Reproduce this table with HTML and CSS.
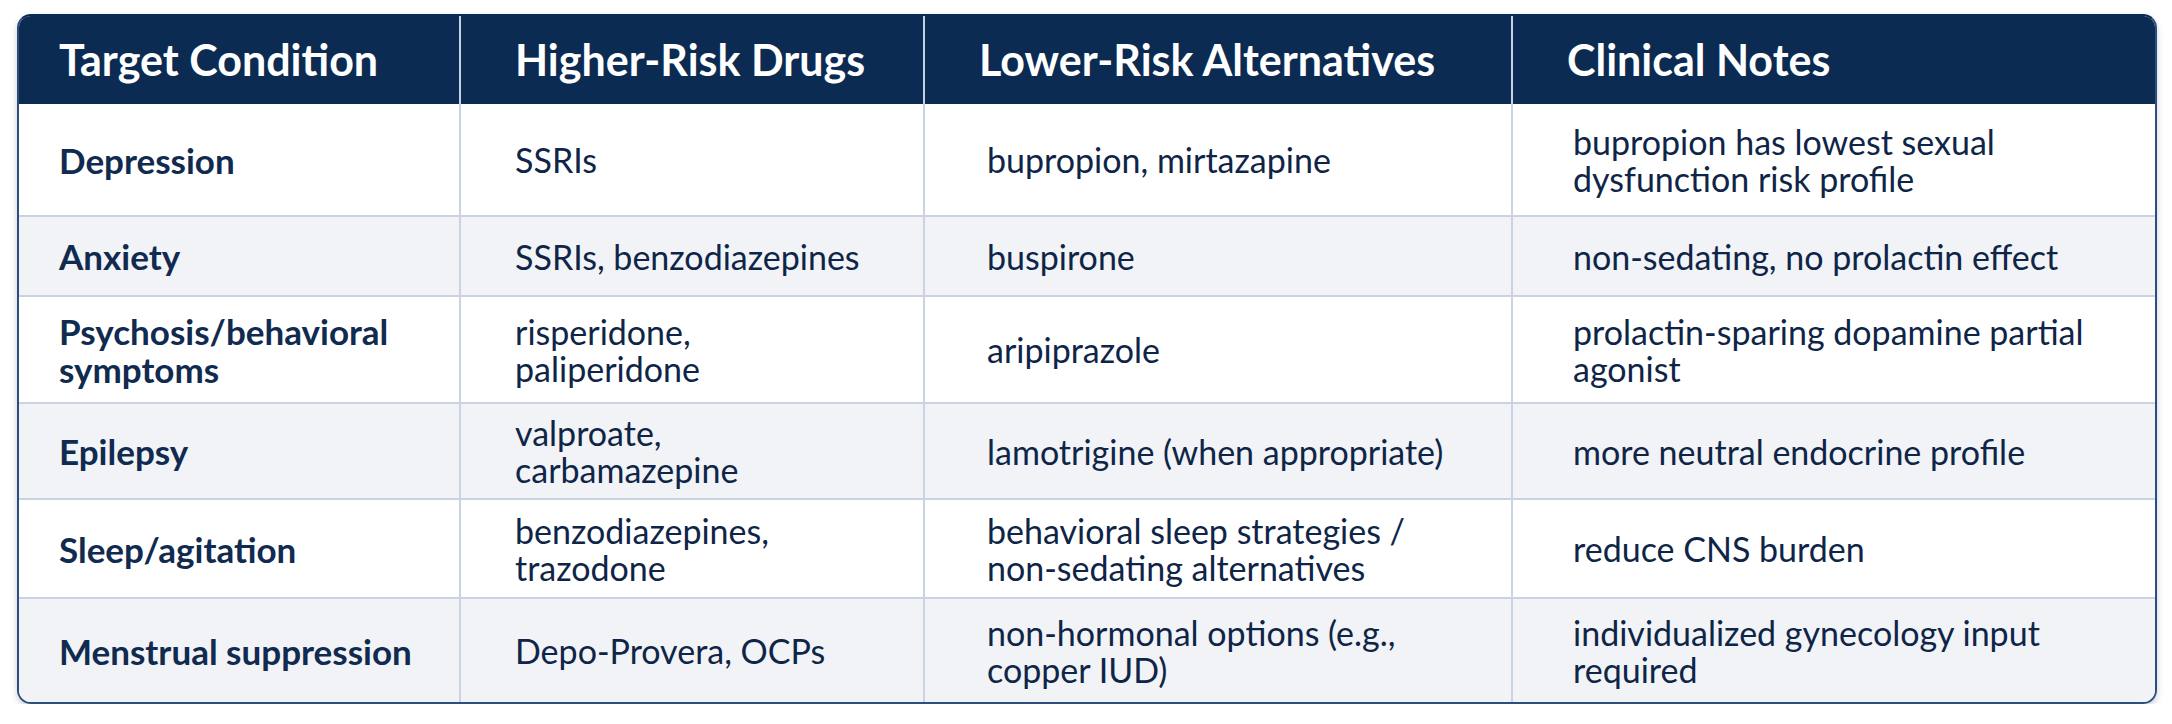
FILE: index.html
```html
<!DOCTYPE html>
<html lang="en">
<head>
<meta charset="utf-8">
<title>Medication risk alternatives</title>
<link rel="stylesheet" href="styles.css">
</head>
<body>
<div class="card">
  <table class="risk-table">
    <colgroup>
      <col class="c1"><col class="c2"><col class="c3"><col class="c4">
    </colgroup>
    <thead>
      <tr class="head">
        <th>Target Condition</th>
        <th>Higher-Risk Drugs</th>
        <th>Lower-Risk Alternatives</th>
        <th>Clinical Notes</th>
      </tr>
    </thead>
    <tbody>
      <tr class="r1">
        <td>Depression</td>
        <td>SSRIs</td>
        <td>bupropion, mirtazapine</td>
        <td>bupropion has lowest sexual<br>dysfunction risk profile</td>
      </tr>
      <tr class="r2 alt">
        <td>Anxiety</td>
        <td>SSRIs, benzodiazepines</td>
        <td>buspirone</td>
        <td>non-sedating, no prolactin effect</td>
      </tr>
      <tr class="r3">
        <td>Psychosis/behavioral<br>symptoms</td>
        <td>risperidone,<br>paliperidone</td>
        <td>aripiprazole</td>
        <td>prolactin-sparing dopamine partial<br>agonist</td>
      </tr>
      <tr class="r4 alt">
        <td>Epilepsy</td>
        <td>valproate,<br>carbamazepine</td>
        <td>lamotrigine (when appropriate)</td>
        <td>more neutral endocrine profile</td>
      </tr>
      <tr class="r5">
        <td>Sleep/agitation</td>
        <td>benzodiazepines,<br>trazodone</td>
        <td>behavioral sleep strategies /<br>non-sedating alternatives</td>
        <td>reduce CNS burden</td>
      </tr>
      <tr class="r6 alt">
        <td>Menstrual suppression</td>
        <td>Depo-Provera, OCPs</td>
        <td>non-hormonal options (e.g.,<br>copper IUD)</td>
        <td>individualized gynecology input<br>required</td>
      </tr>
    </tbody>
  </table>
</div>
</body>
</html>
```
FILE: styles.css
```css
html, body {
  margin: 0;
  padding: 0;
  background: #ffffff;
}

body {
  font-family: "Lato", "Liberation Sans", sans-serif;
  color: #10264a;
}

.card {
  margin: 14px 15px 0 17px;
  border: 2px solid #2d4d7c;
  border-top-color: #0b2b52;
  border-radius: 14px;
  overflow: hidden;
  box-shadow: 0 3px 6px rgba(40, 60, 100, 0.25);
}

.risk-table {
  width: 100%;
  border-collapse: collapse;
  table-layout: fixed;
}

.c1 { width: 441px; }
.c2 { width: 464px; }
.c3 { width: 588px; }
.c4 { width: auto; }

.head {
  background: #0b2b52;
  height: 88px;
}

.head th {
  color: #ffffff;
  font-weight: 700;
  font-size: 43px;
  text-align: left;
  vertical-align: middle;
  padding: 0 0 2px 54px;
  border-left: 2px solid #c7d2e2;
}

.head th:first-child {
  border-left: none;
  padding-left: 40px;
}

td {
  font-size: 34px;
  line-height: 37px;
  color: #0f2548;
  vertical-align: middle;
  padding: 0 0 0 54px;
  border-left: 2px solid #c9d3e1;
  border-top: 2px solid #c9d3e1;
}

td:first-child {
  border-left: none;
  padding-left: 40px;
  font-weight: 700;
  font-size: 35px;
  line-height: 38px;
  color: #102a50;
}

td:nth-child(3) { padding-left: 62px; }
td:nth-child(4) { padding-left: 60px; }

tbody tr:first-child td { border-top: none; }

.alt { background: #f1f3f6; }

.r1 { height: 112px; }
.r2 { height: 80px; }
.r3 { height: 107px; }
.r4 { height: 96px; }
.r5 { height: 99px; }
.r6 { height: 104px; }
```
